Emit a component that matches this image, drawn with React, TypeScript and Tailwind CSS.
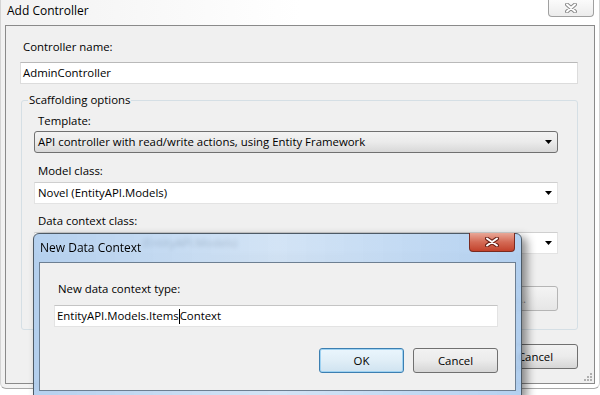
import React from "react";

function Arrow() {
  return (
    <svg width="7" height="4" viewBox="0 0 7 4" className="block">
      <path d="M0 0 H7 L3.5 4 Z" fill="#000" />
    </svg>
  );
}

function CloseGlyph({ stroke, fill, w = 12 }: { stroke: string; fill: string; w?: number }) {
  return (
    <svg width={w} height="10" viewBox={`0 0 ${w} 10`} className="block">
      <path d={`M2 1.5 L${w - 2} 8.5 M${w - 2} 1.5 L2 8.5`} stroke={stroke} strokeWidth="4" strokeLinecap="round" />
      <path d={`M2 1.5 L${w - 2} 8.5 M${w - 2} 1.5 L2 8.5`} stroke={fill} strokeWidth="2" strokeLinecap="round" />
    </svg>
  );
}

function Label({ children, className = "" }: { children: React.ReactNode; className?: string }) {
  return <div className={"h-[16px] leading-[16px] " + className}>{children}</div>;
}

export default function App() {
  return (
    <div
      className="relative w-[600px] h-[395px] overflow-hidden bg-white text-[11.4px] text-black"
      style={{ fontFamily: "'Open Sans', 'Noto Sans', sans-serif" }}
    >
      {/* Main window */}
      <div className="w-[600px] h-[389px] rounded-b-[6px] border-x border-b border-x-[#d4d4d4] border-b-[#a8a8a8] bg-gradient-to-r from-[#f2f2f2] via-white to-white flex flex-col">
        {/* Title row */}
        <div className="h-[25px] flex justify-between items-start">
          <span className="pl-[6px] pt-[3px] text-[12px] leading-[16px]">Add Controller</span>
          <div className="mr-[5px] w-[46px] h-[17px] border border-t-0 border-[#a0a0a0] rounded-b-[4px] bg-gradient-to-b from-[#fbfbfb] to-[#ececec] flex items-center justify-center">
            <CloseGlyph stroke="#8a8a8a" fill="#ffffff" />
          </div>
        </div>

        {/* Inner panel */}
        <div className="relative mx-[4px] h-[359px] border border-[#8a8a8a] bg-[#f0f0f0] pl-[14px] pr-[16px] pt-[13px]">
          <Label className="ml-[3px]">Controller name:</Label>
          <div className="mt-[7px] h-[22px] bg-white border border-[#dcdcdc] border-t-[#b9b9b9] pl-[2px] leading-[20px]">
            AdminController
          </div>

          {/* Group box */}
          <div className="relative mt-[16px] ml-[1px] h-[230px] border border-[#d5dfe5] rounded-[3px] pl-[12px] pr-[19px] pt-[12px]">
            <span className="absolute -top-[9px] left-[6px] px-[1px] bg-[#f0f0f0] leading-[16px]">
              Scaffolding options
            </span>
            <Label className="ml-[4px]">Template:</Label>
            <div className="mt-[2px] h-[22px] rounded-[3px] border border-[#707070] bg-gradient-to-b from-[#f3f3f3] via-[#ebebeb] to-[#d8d8d8] flex items-center justify-between pl-[3px] pr-[5px]">
              <span>API controller with read/write actions, using Entity Framework</span>
              <Arrow />
            </div>
            <Label className="mt-[10px] ml-[4px]">Model class:</Label>
            <div className="mt-[3px] h-[22px] bg-white border border-[#e3e3e3] border-t-[#cfcfcf] flex items-center justify-between pl-[3px] pr-[5px]">
              <span>Novel (EntityAPI.Models)</span>
              <Arrow />
            </div>
            <Label className="mt-[9px] ml-[4px]">Data context class:</Label>
            <div className="mt-[3px] h-[22px] bg-white border border-[#e3e3e3] border-t-[#cfcfcf] flex items-center justify-between pl-[3px] pr-[5px]">
              <span className="pl-[104px] text-[#333]">(EntityAPI.Models)</span>
              <Arrow />
            </div>
            <div className="mt-[32px] flex justify-end">
              <div className="w-[170px] h-[25px] rounded-[3px] border border-[#b5b5b5] bg-gradient-to-b from-[#f4f4f4] to-[#e6e6e6] flex items-center justify-center text-[#8d8d8d]">
                Advanced Options...
              </div>
            </div>
          </div>

          {/* Bottom buttons */}
          <div className="mt-[14px] flex justify-end">
            <div className="w-[85px] h-[25px] rounded-[3px] border border-[#707070] bg-gradient-to-b from-[#f2f2f2] via-[#ebebeb] to-[#d6d6d6] flex items-center justify-center">
              Cancel
            </div>
          </div>

          {/* Resize grip */}
          <svg width="9" height="9" viewBox="0 0 9 9" className="absolute right-[2px] bottom-[2px]">
            {[[7, 1], [7, 4], [4, 4], [7, 7], [4, 7], [1, 7]].map(([x, y], i) => (
              <rect key={i} x={x} y={y} width="2" height="2" fill="#b0b0b0" />
            ))}
          </svg>
        </div>
      </div>

      {/* New Data Context dialog */}
      <div className="absolute left-[33px] top-[233px] w-[489px] h-[164px] rounded-t-[6px] border border-[#4d5a66] bg-gradient-to-r from-[#a9c9ec]/85 via-[#c8ddf3]/80 to-[#a7c9ee]/85 backdrop-blur-[2px] shadow-[5px_4px_10px_rgba(0,0,0,0.45)] flex flex-col px-[5px] pb-[5px]">
        <div className="h-[28px] flex justify-between items-start">
          <span className="pl-[1px] pt-[6px] text-[12px] leading-[16px]">New Data Context</span>
          <div className="-mt-[1px] mr-[1px] w-[46px] h-[19px] rounded-b-[4px] border border-t-0 border-[#7a2a20] bg-gradient-to-b from-[#e8a797] via-[#d46a55] to-[#c2412b] flex items-center justify-center">
            <CloseGlyph stroke="#6b2218" fill="#ffffff" w={14} />
          </div>
        </div>
        <div className="flex-1 border border-[#6d7f92] bg-[#f0f0f0] pl-[14px] pr-[17px] pt-[18px]">
          <Label className="ml-[4px]">New data context type:</Label>
          <div className="mt-[8px] h-[22px] bg-white border border-[#e3e3e3] border-t-[#c4c4c4] pl-[2px] leading-[20px] flex">
            <span>EntityAPI.Models.Items</span>
            <span className="w-px h-[15px] mt-[3px] bg-black" />
            <span>Context</span>
          </div>
          <div className="mt-[21px] flex justify-end gap-[9px]">
            <div className="w-[85px] h-[25px] rounded-[3px] border border-[#3c7fb1] bg-gradient-to-b from-[#eaf6fd] via-[#e0eef7] to-[#cfe3f0] shadow-[inset_0_0_0_1px_#9ed2f2] flex items-center justify-center">
              OK
            </div>
            <div className="w-[85px] h-[25px] rounded-[3px] border border-[#707070] bg-gradient-to-b from-[#f2f2f2] via-[#ebebeb] to-[#d6d6d6] flex items-center justify-center">
              Cancel
            </div>
          </div>
        </div>
      </div>
    </div>
  );
}
